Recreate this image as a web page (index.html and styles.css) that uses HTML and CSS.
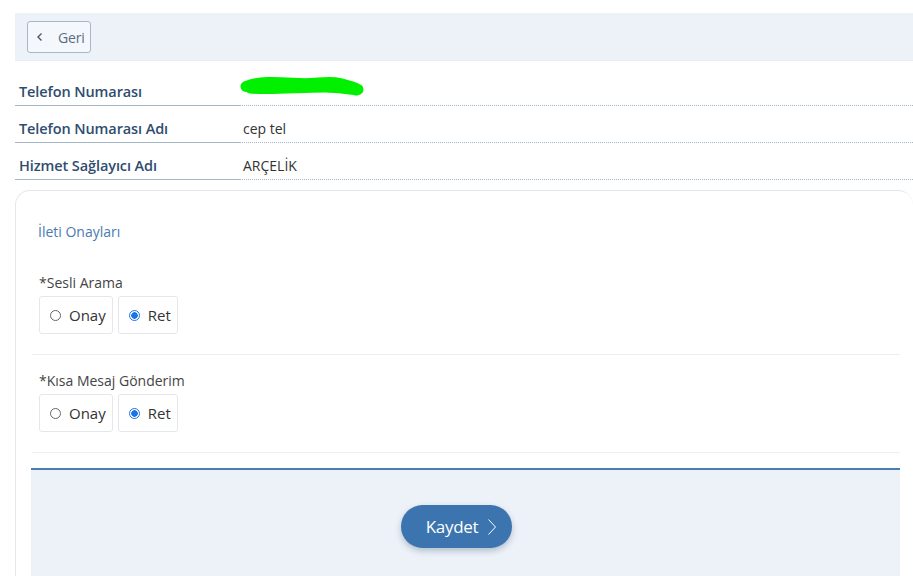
FILE: index.html
```html
<!DOCTYPE html>
<html lang="tr">
<head>
    <meta charset="UTF-8">
    <meta name="viewport" content="width=device-width, initial-scale=1.0">
    <title>İleti Onayları</title>
    <link rel="stylesheet" href="styles.css">
</head>
<body>
    <div class="page">
        <div class="toolbar">
            <button class="btn-back">
                <svg width="8" height="10" viewBox="0 0 8 10"><path d="M5.5 1.5 L2 5 L5.5 8.5" fill="none" stroke="#4a5a6b" stroke-width="1.4"/></svg>
                <span>Geri</span>
            </button>
        </div>

        <div class="info-list">
            <div class="info-row">
                <div class="info-label">Telefon Numarası</div>
                <div class="info-value">
                    <svg class="scribble" width="126" height="24" viewBox="0 0 126 24">
                        <path d="M6 12 C20 6 40 8 60 9 C75 10 88 6 100 9 C110 12 114 12 118 15" fill="none" stroke="#00f000" stroke-width="11" stroke-linecap="round"/>
                        <path d="M10 15 C30 17 60 14 85 14 C100 14 110 16 116 17" fill="none" stroke="#00f000" stroke-width="8" stroke-linecap="round"/>
                    </svg>
                </div>
            </div>
            <div class="info-row">
                <div class="info-label">Telefon Numarası Adı</div>
                <div class="info-value">cep tel</div>
            </div>
            <div class="info-row">
                <div class="info-label">Hizmet Sağlayıcı Adı</div>
                <div class="info-value">ARÇELİK</div>
            </div>
        </div>

        <div class="card">
            <h4 class="card-title">İleti Onayları</h4>

            <div class="form-group">
                <div class="form-label">*Sesli Arama</div>
                <div class="radio-group">
                    <label class="radio-box"><input type="radio" name="sesli"> Onay</label>
                    <label class="radio-box"><input type="radio" name="sesli" checked> Ret</label>
                </div>
            </div>

            <div class="form-group">
                <div class="form-label">*Kısa Mesaj Gönderim</div>
                <div class="radio-group">
                    <label class="radio-box"><input type="radio" name="sms"> Onay</label>
                    <label class="radio-box"><input type="radio" name="sms" checked> Ret</label>
                </div>
            </div>

            <div class="card-footer">
                <button class="btn-save">
                    <span>Kaydet</span>
                    <svg width="10" height="18" viewBox="0 0 10 18"><path d="M1.5 1.5 L8.5 9 L1.5 16.5" fill="none" stroke="#ffffff" stroke-width="1"/></svg>
                </button>
            </div>
        </div>
    </div>
</body>
</html>
```

FILE: styles.css
```css
:root {
    --primary: #3b74ae;
    --label: #2f4d6f;
    --panel: #edf2f8;
    --line: #a3b6c8;
    --text: #333333;
    --border: #e4e7eb;
}

* {
    margin: 0;
    padding: 0;
    box-sizing: border-box;
}

body {
    font-family: 'Open Sans', 'Noto Sans', sans-serif;
    color: var(--text);
    background: #ffffff;
    overflow: hidden;
}

.page {
    padding: 13px 0 0 15px;
}

.toolbar {
    background: var(--panel);
    border-bottom: 1px solid #e6ecf3;
    height: 48px;
    padding: 8px 12px;
}

.btn-back {
    display: flex;
    align-items: center;
    gap: 14px;
    height: 32px;
    width: 64px;
    padding: 0 0 0 8px;
    background: #f4f7fb;
    border: 1px solid #a9b8c8;
    border-radius: 3px;
    font-family: inherit;
    font-size: 14px;
    letter-spacing: -0.2px;
    color: #5b6d80;
}

.info-list {
    margin-top: 8px;
}

.info-row {
    display: flex;
}

.info-label {
    width: 225px;
    flex-shrink: 0;
    padding: 12px 0 3px 4px;
    line-height: 21px;
    font-size: 14.5px;
    font-weight: 600;
    letter-spacing: -0.1px;
    color: var(--label);
    border-bottom: 1px solid var(--line);
}

.info-value {
    flex: 1;
    padding: 12px 0 3px 3px;
    line-height: 21px;
    font-size: 14px;
    color: var(--text);
    border-bottom: 1px dotted var(--line);
}

.scribble {
    display: block;
    margin: -10px 0 0 -3px;
    height: 31px;
}

.card {
    margin-top: 10px;
    border: 1px solid var(--border);
    border-right: none;
    border-radius: 15px 15px 0 0;
    padding: 31px 13px 0 16px;
    height: 400px;
}

.card-title {
    font-size: 14px;
    font-weight: 400;
    line-height: 20px;
    color: #4a7bb2;
    padding-left: 6px;
    margin-bottom: 31px;
}

.form-group {
    padding: 0 0 20px 7px;
    border-bottom: 1px solid #eeeeee;
    margin-bottom: 16px;
}

.form-group + .form-group {
    margin-bottom: 15px;
}

.form-label {
    font-size: 14px;
    line-height: 20px;
    color: #444444;
    margin-bottom: 3px;
}

.radio-group {
    display: flex;
    gap: 5px;
}

.radio-box {
    display: flex;
    align-items: center;
    gap: 8px;
    height: 38px;
    padding: 0 6px 0 10px;
    border: 1px solid var(--border);
    border-radius: 3px;
    font-size: 15px;
    color: #333333;
}

.radio-box input {
    appearance: none;
    width: 11px;
    height: 11px;
    border: 1px solid #666666;
    border-radius: 50%;
    margin: 0;
}

.radio-box input:checked {
    border-color: #1a73e8;
    background: radial-gradient(circle, #1a73e8 0 3px, #ffffff 3.5px);
}

.card-footer {
    margin-left: -1px;
    border-top: 2px solid #4a7eb0;
    background: var(--panel);
    height: 120px;
    display: flex;
    justify-content: center;
    padding: 35px 18px 0 0;
}

.btn-save {
    display: flex;
    align-items: center;
    gap: 9px;
    height: 43px;
    padding: 0 15px 0 25px;
    background: var(--primary);
    border: none;
    border-radius: 22px;
    box-shadow: 0 3px 6px rgba(40, 70, 110, 0.3);
    color: #ffffff;
    font-family: inherit;
    font-size: 17px;
    letter-spacing: -0.3px;
}
```
